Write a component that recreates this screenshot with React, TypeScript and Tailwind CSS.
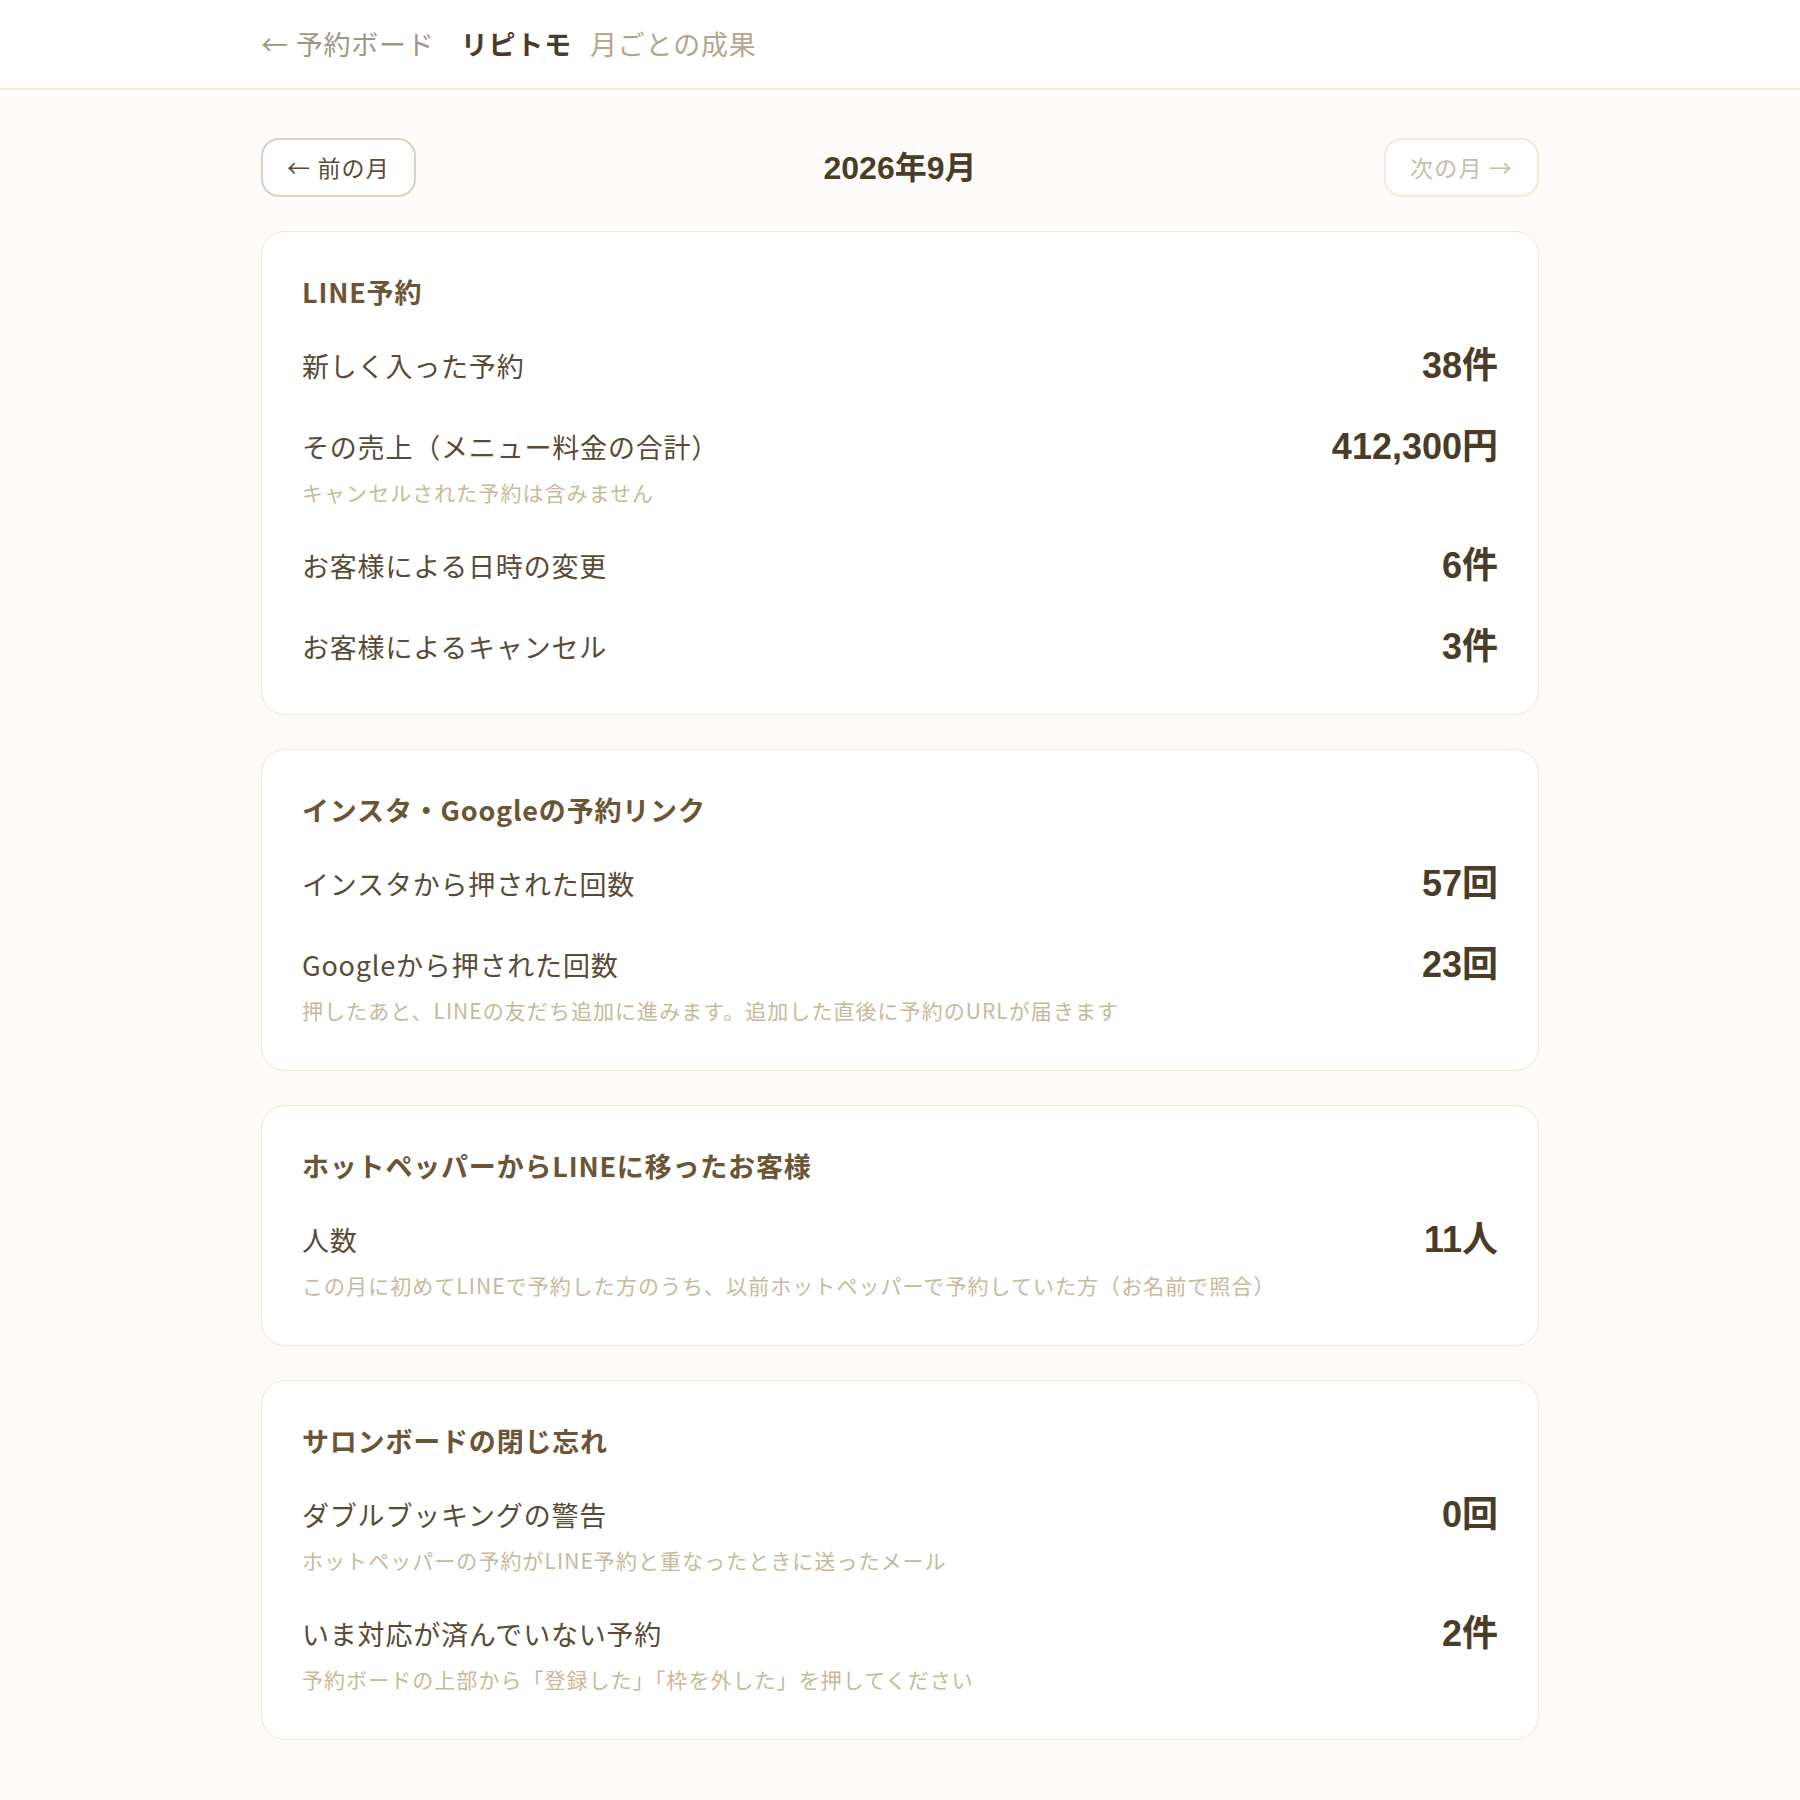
const jp = { fontFamily: '"Noto Sans CJK JP", "Noto Sans", sans-serif' };
const num = { fontFamily: '"Liberation Sans", "Noto Sans CJK JP", sans-serif' };

type Row = { label: string; value: string; note?: string };
type Section = { title: string; rows: Row[] };

const sections: Section[] = [
  {
    title: 'LINE予約',
    rows: [
      { label: '新しく入った予約', value: '38件' },
      { label: 'その売上（メニュー料金の合計）', value: '412,300円', note: 'キャンセルされた予約は含みません' },
      { label: 'お客様による日時の変更', value: '6件' },
      { label: 'お客様によるキャンセル', value: '3件' },
    ],
  },
  {
    title: 'インスタ・Googleの予約リンク',
    rows: [
      { label: 'インスタから押された回数', value: '57回' },
      {
        label: 'Googleから押された回数',
        value: '23回',
        note: '押したあと、LINEの友だち追加に進みます。追加した直後に予約のURLが届きます',
      },
    ],
  },
  {
    title: 'ホットペッパーからLINEに移ったお客様',
    rows: [
      {
        label: '人数',
        value: '11人',
        note: 'この月に初めてLINEで予約した方のうち、以前ホットペッパーで予約していた方（お名前で照合）',
      },
    ],
  },
  {
    title: 'サロンボードの閉じ忘れ',
    rows: [
      { label: 'ダブルブッキングの警告', value: '0回', note: 'ホットペッパーの予約がLINE予約と重なったときに送ったメール' },
      { label: 'いま対応が済んでいない予約', value: '2件', note: '予約ボードの上部から「登録した」「枠を外した」を押してください' },
    ],
  },
];

const SectionCard = ({ section }: { section: Section }) => (
  <section className="flex flex-col gap-[27px] rounded-[24px] border-[1.5px] border-[#f2e7d3] bg-white px-10 py-10">
    <h2 className="text-[27px] font-bold leading-[40px] tracking-[0.03em] text-[#6b5535]">{section.title}</h2>
    {section.rows.map((row) => (
      <div key={row.label} className="flex items-start justify-between gap-6">
        <div>
          <div className="text-[27px] leading-[54px] tracking-[0.03em] text-[#5a4a35]">{row.label}</div>
          {row.note && (
            <div className="-mt-[2px] text-[21px] leading-[40px] tracking-[0.05em] text-[#c9b89a]">{row.note}</div>
          )}
        </div>
        <div style={num} className="shrink-0 text-[36px] font-bold leading-[54px] text-[#4a3c26]">
          {row.value}
        </div>
      </div>
    ))}
  </section>
);

export default function App() {
  return (
    <div style={jp} className="min-h-screen bg-[#fdfcfa]">
      <header className="h-[90px] border-b-2 border-[#f3ead9] bg-white">
        <div className="mx-auto flex h-full max-w-[1278px] items-center gap-[26px] text-[27px] tracking-[0.03em]">
          <span className="text-[#a39580]">← 予約ボード</span>
          <span className="font-bold text-[#4a3c26]">リピトモ</span>
          <span className="-ml-2 text-[#b5a58c]">月ごとの成果</span>
        </div>
      </header>

      <main className="mx-auto flex max-w-[1278px] flex-col gap-[34px] pt-[48px] pb-[60px]">
        <div className="flex items-center justify-between">
          <button className="rounded-[18px] border-2 border-[#ddd0bc] bg-white px-6 py-3 text-[23px] leading-[31px] tracking-[0.05em] text-[#5a4a35]">
            ← 前の月
          </button>
          <h1 style={num} className="text-[32px] font-bold text-[#4a3c26]">2026年9月</h1>
          <button disabled className="rounded-[18px] border-2 border-[#f3ead9] bg-white px-6 py-3 text-[23px] leading-[31px] tracking-[0.05em] text-[#c9bca6]">
            次の月 →
          </button>
        </div>

        {sections.map((s) => (
          <SectionCard key={s.title} section={s} />
        ))}
      </main>
    </div>
  );
}
